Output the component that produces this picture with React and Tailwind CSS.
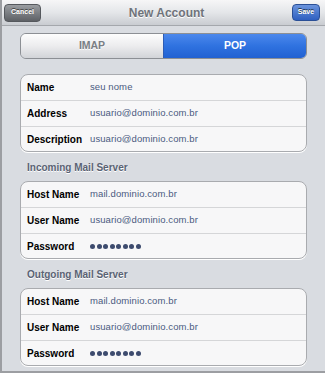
import React from "react";

const font = { fontFamily: '"Liberation Sans", Arial, Helvetica, sans-serif' };

function Dots() {
  return (
    <div className="flex items-center gap-[1.5px]">
      {Array.from({ length: 8 }).map((_, i) => (
        <span key={i} className="w-[5px] h-[5px] rounded-full bg-[#3d4b6e]" />
      ))}
    </div>
  );
}

function Row({ label, value, last }) {
  return (
    <div
      className={`flex items-center ${
        last ? "h-[24px]" : "h-[26px] border-b border-[#d5d6d8]"
      }`}
    >
      <div className="w-[69px] shrink-0 pl-[6px] text-[10px] font-bold text-black">
        {label}
      </div>
      {value === "dots" ? (
        <Dots />
      ) : (
        <div className="text-[9.5px] text-[#4a5a80] tracking-[0.1px]">{value}</div>
      )}
    </div>
  );
}

function Group({ rows }) {
  return (
    <div className="mx-[18px] shrink-0 rounded-[8px] border border-[#a9abaf] bg-[#f7f7f8] shadow-[0_1px_0_#ffffff]">
      {rows.map((r, i) => (
        <Row key={r.label} {...r} last={i === rows.length - 1} />
      ))}
    </div>
  );
}

function SectionLabel({ children }) {
  return (
    <div className="h-[29px] shrink-0 flex items-end pb-[6px] pl-[25px] text-[10px] font-bold text-[#596273] [text-shadow:0_1px_0_#ffffff]">
      {children}
    </div>
  );
}

export default function App() {
  return (
    <div
      style={font}
      className="w-[325px] h-[373px] overflow-hidden bg-[#d9dce1] border-l-2 border-b-2 border-[#9c9ea2] flex flex-col"
    >
      {/* Nav bar */}
      <div className="h-[26px] shrink-0 flex items-center justify-between px-[2px] bg-gradient-to-b from-[#f6f6f7] via-[#e4e6e9] to-[#c9ccd1] border-b border-[#a4a7ac]">
        <button className="w-[37px] h-[18px] rounded-[4px] border border-[#55585d] bg-gradient-to-b from-[#9a9da1] to-[#5e6166] text-white text-[7px] font-bold [text-shadow:0_-1px_0_#444]">
          Cancel
        </button>
        <div className="text-[12px] font-bold text-[#6f737a] [text-shadow:0_1px_0_#ffffff]">
          New Account
        </div>
        <button className="mr-[3px] w-[28px] h-[17px] rounded-[4px] border border-[#2a4f96] bg-gradient-to-b from-[#6a93dc] to-[#2f5fc0] text-white text-[7px] font-bold [text-shadow:0_-1px_0_#234]">
          Save
        </button>
      </div>

      {/* Segmented control */}
      <div className="mt-[7px] mx-[18px] h-[26px] shrink-0 flex rounded-[6px] border border-[#8c8f94] overflow-hidden">
        <div className="flex-1 flex items-center justify-center bg-gradient-to-b from-[#fdfdfd] via-[#ececee] to-[#d2d4d8] text-[10.5px] font-bold text-[#7a7e84] [text-shadow:0_1px_0_#ffffff]">
          IMAP
        </div>
        <div className="flex-1 flex items-center justify-center border-l border-[#2d5cb5] bg-gradient-to-b from-[#4b88ec] via-[#2f72e0] to-[#2161d2] text-[10.5px] font-bold text-white">
          POP
        </div>
      </div>

      <div className="h-[15px] shrink-0" />
      <Group
        rows={[
          { label: "Name", value: "seu nome" },
          { label: "Address", value: "usuario@dominio.com.br" },
          { label: "Description", value: "usuario@dominio.com.br" },
        ]}
      />

      <SectionLabel>Incoming Mail Server</SectionLabel>
      <Group
        rows={[
          { label: "Host Name", value: "mail.dominio.com.br" },
          { label: "User Name", value: "usuario@dominio.com.br" },
          { label: "Password", value: "dots" },
        ]}
      />

      <SectionLabel>Outgoing Mail Server</SectionLabel>
      <Group
        rows={[
          { label: "Host Name", value: "mail.dominio.com.br" },
          { label: "User Name", value: "usuario@dominio.com.br" },
          { label: "Password", value: "dots" },
        ]}
      />
    </div>
  );
}
